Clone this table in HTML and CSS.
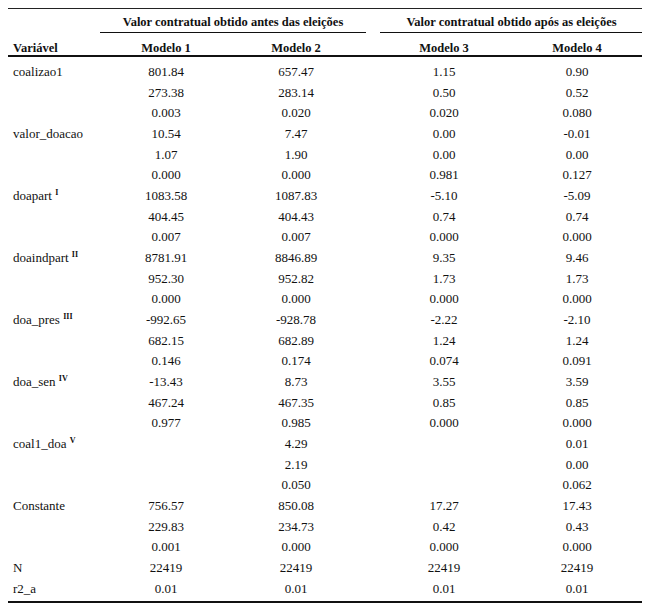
FILE: index.html
```html
<!DOCTYPE html>
<html lang="pt">
<head>
<meta charset="utf-8">
<title>Tabela de regressão</title>
<link rel="stylesheet" href="styles.css">
</head>
<body>
<table class="reg">
  <colgroup>
    <col class="c-var"><col class="c-m1"><col class="c-m2"><col class="c-gap"><col class="c-m3"><col class="c-m4">
  </colgroup>
  <thead>
    <tr class="grp-row">
      <th class="blank"></th>
      <th class="grp" colspan="2">Valor contratual obtido antes das eleições</th>
      <th class="blank"></th>
      <th class="grp" colspan="2">Valor contratual obtido após as eleições</th>
    </tr>
    <tr class="hdr-row">
      <th class="var">Variável</th>
      <th class="m1">Modelo 1</th>
      <th class="m2">Modelo 2</th>
      <th class="gap"></th>
      <th class="m3">Modelo 3</th>
      <th class="m4">Modelo 4</th>
    </tr>
  </thead>
  <tbody>
    <tr class="first"><td class="var">coalizao1</td><td class="m1">801.84</td><td class="m2">657.47</td><td></td><td class="m3">1.15</td><td class="m4">0.90</td></tr>
    <tr><td class="var"></td><td class="m1">273.38</td><td class="m2">283.14</td><td></td><td class="m3">0.50</td><td class="m4">0.52</td></tr>
    <tr><td class="var"></td><td class="m1">0.003</td><td class="m2">0.020</td><td></td><td class="m3">0.020</td><td class="m4">0.080</td></tr>
    <tr><td class="var">valor_doacao</td><td class="m1">10.54</td><td class="m2">7.47</td><td></td><td class="m3">0.00</td><td class="m4">-0.01</td></tr>
    <tr><td class="var"></td><td class="m1">1.07</td><td class="m2">1.90</td><td></td><td class="m3">0.00</td><td class="m4">0.00</td></tr>
    <tr><td class="var"></td><td class="m1">0.000</td><td class="m2">0.000</td><td></td><td class="m3">0.981</td><td class="m4">0.127</td></tr>
    <tr><td class="var">doapart <sup>I</sup></td><td class="m1">1083.58</td><td class="m2">1087.83</td><td></td><td class="m3">-5.10</td><td class="m4">-5.09</td></tr>
    <tr><td class="var"></td><td class="m1">404.45</td><td class="m2">404.43</td><td></td><td class="m3">0.74</td><td class="m4">0.74</td></tr>
    <tr><td class="var"></td><td class="m1">0.007</td><td class="m2">0.007</td><td></td><td class="m3">0.000</td><td class="m4">0.000</td></tr>
    <tr><td class="var">doaindpart <sup>II</sup></td><td class="m1">8781.91</td><td class="m2">8846.89</td><td></td><td class="m3">9.35</td><td class="m4">9.46</td></tr>
    <tr><td class="var"></td><td class="m1">952.30</td><td class="m2">952.82</td><td></td><td class="m3">1.73</td><td class="m4">1.73</td></tr>
    <tr><td class="var"></td><td class="m1">0.000</td><td class="m2">0.000</td><td></td><td class="m3">0.000</td><td class="m4">0.000</td></tr>
    <tr><td class="var">doa_pres <sup>III</sup></td><td class="m1">-992.65</td><td class="m2">-928.78</td><td></td><td class="m3">-2.22</td><td class="m4">-2.10</td></tr>
    <tr><td class="var"></td><td class="m1">682.15</td><td class="m2">682.89</td><td></td><td class="m3">1.24</td><td class="m4">1.24</td></tr>
    <tr><td class="var"></td><td class="m1">0.146</td><td class="m2">0.174</td><td></td><td class="m3">0.074</td><td class="m4">0.091</td></tr>
    <tr><td class="var">doa_sen <sup>IV</sup></td><td class="m1">-13.43</td><td class="m2">8.73</td><td></td><td class="m3">3.55</td><td class="m4">3.59</td></tr>
    <tr><td class="var"></td><td class="m1">467.24</td><td class="m2">467.35</td><td></td><td class="m3">0.85</td><td class="m4">0.85</td></tr>
    <tr><td class="var"></td><td class="m1">0.977</td><td class="m2">0.985</td><td></td><td class="m3">0.000</td><td class="m4">0.000</td></tr>
    <tr><td class="var">coal1_doa <sup>V</sup></td><td class="m1"></td><td class="m2">4.29</td><td></td><td class="m3"></td><td class="m4">0.01</td></tr>
    <tr><td class="var"></td><td class="m1"></td><td class="m2">2.19</td><td></td><td class="m3"></td><td class="m4">0.00</td></tr>
    <tr><td class="var"></td><td class="m1"></td><td class="m2">0.050</td><td></td><td class="m3"></td><td class="m4">0.062</td></tr>
    <tr><td class="var">Constante</td><td class="m1">756.57</td><td class="m2">850.08</td><td></td><td class="m3">17.27</td><td class="m4">17.43</td></tr>
    <tr><td class="var"></td><td class="m1">229.83</td><td class="m2">234.73</td><td></td><td class="m3">0.42</td><td class="m4">0.43</td></tr>
    <tr><td class="var"></td><td class="m1">0.001</td><td class="m2">0.000</td><td></td><td class="m3">0.000</td><td class="m4">0.000</td></tr>
    <tr><td class="var">N</td><td class="m1">22419</td><td class="m2">22419</td><td></td><td class="m3">22419</td><td class="m4">22419</td></tr>
    <tr class="last"><td class="var">r2_a</td><td class="m1">0.01</td><td class="m2">0.01</td><td></td><td class="m3">0.01</td><td class="m4">0.01</td></tr>
  </tbody>
</table>
</body>
</html>
```

FILE: styles.css
```css
html, body {
  background: #ffffff;
}
body {
  margin: 8px;
  font-family: "Liberation Serif", "Times New Roman", serif;
  font-size: 13px;
  color: #111111;
}
.reg {
  table-layout: fixed;
  width: 635px;
  border-collapse: separate;
  border-spacing: 0;
  border-top: 1px solid #222222;
  border-bottom: 2px solid #111111;
}
.c-var { width: 92px; }
.c-m1 { width: 132px; }
.c-m2 { width: 134px; }
.c-gap { width: 14px; }
.c-m3 { width: 128px; }
.c-m4 { width: 135px; }

th, td {
  padding: 0;
  white-space: nowrap;
}
th {
  font-weight: bold;
  font-size: 12.5px;
  vertical-align: bottom;
  line-height: 14px;
}
.grp-row th {
  height: 20px;
  padding-bottom: 3px;
}
.grp-row th.grp {
  text-align: center;
  border-bottom: 1px solid #111111;
}
.grp-row th.blank {
  padding-bottom: 4px;
}
.hdr-row th {
  height: 22px;
  border-bottom: 2px solid #111111;
}
td {
  height: 20.67px;
  line-height: 20.67px;
  vertical-align: top;
}
.var {
  text-align: left;
  padding-left: 5px;
}
.m1, .m2, .m3, .m4 {
  text-align: center;
}
.m2 { padding-right: 6px; }
.m4 { padding-left: 3px; }

tr.first td {
  padding-top: 5px;
}
tr.last td {
  padding-bottom: 2px;
}
sup {
  font-size: 8px;
  font-weight: bold;
  line-height: 0;
  vertical-align: 5px;
}
```
